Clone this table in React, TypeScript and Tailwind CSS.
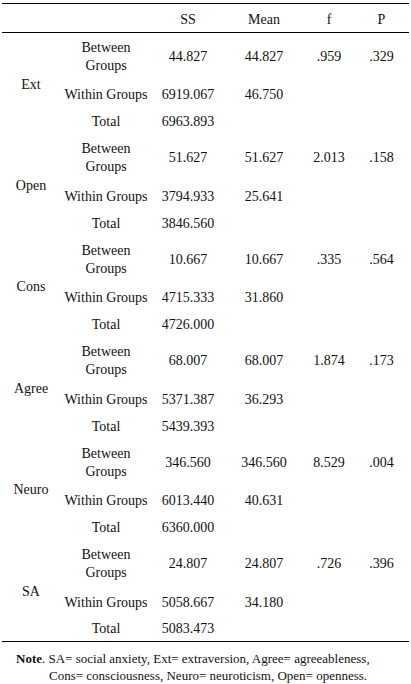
const groups = [
  { name: 'Ext', between: ['44.827', '44.827', '.959', '.329'], within: ['6919.067', '46.750'], total: '6963.893' },
  { name: 'Open', between: ['51.627', '51.627', '2.013', '.158'], within: ['3794.933', '25.641'], total: '3846.560' },
  { name: 'Cons', between: ['10.667', '10.667', '.335', '.564'], within: ['4715.333', '31.860'], total: '4726.000' },
  { name: 'Agree', between: ['68.007', '68.007', '1.874', '.173'], within: ['5371.387', '36.293'], total: '5439.393' },
  { name: 'Neuro', between: ['346.560', '346.560', '8.529', '.004'], within: ['6013.440', '40.631'], total: '6360.000' },
  { name: 'SA', between: ['24.807', '24.807', '.726', '.396'], within: ['5058.667', '34.180'], total: '5083.473' },
];

const cell = 'p-0 text-center align-middle font-normal';

const App = () => {
  return (
    <div className="w-[411px] h-[684px] bg-white pt-[3px] px-[2px] text-[#111] font-['Liberation_Serif','Times_New_Roman',serif]">
      <table className="w-[407px] table-fixed border-collapse text-[14px] leading-[18px]">
        <colgroup>
          <col className="w-[58px]" />
          <col className="w-[92px]" />
          <col className="w-[72px]" />
          <col className="w-[80px]" />
          <col className="w-[50px]" />
          <col className="w-[55px]" />
        </colgroup>
        <thead>
          <tr className="h-[29px] border-t border-b border-black">
            <th className={cell + ' pt-[3px]'}></th>
            <th className={cell + ' pt-[3px]'}></th>
            <th className={cell + ' pt-[3px]'}>SS</th>
            <th className={cell + ' pt-[3px]'}>Mean</th>
            <th className={cell + ' pt-[3px]'}>f</th>
            <th className={cell + ' pt-[3px]'}>P</th>
          </tr>
        </thead>
        <tbody className="border-b border-black">
          {groups.map((g) => (
            <>
              <tr key={g.name + '-b'} className="h-[46px]">
                <td rowSpan={3} className={cell + ' pt-[2px]'}>{g.name}</td>
                <td className={cell + ' pt-[2px]'}>Between<br />Groups</td>
                <td className={cell + ' pt-[2px]'}>{g.between[0]}</td>
                <td className={cell + ' pt-[2px]'}>{g.between[1]}</td>
                <td className={cell + ' pt-[2px]'}>{g.between[2]}</td>
                <td className={cell + ' pt-[2px]'}>{g.between[3]}</td>
              </tr>
              <tr key={g.name + '-w'} className="h-[31.5px]">
                <td className={cell + ' pt-[2px]'}>Within Groups</td>
                <td className={cell + ' pt-[2px]'}>{g.within[0]}</td>
                <td className={cell + ' pt-[2px]'}>{g.within[1]}</td>
                <td className={cell}></td>
                <td className={cell}></td>
              </tr>
              <tr key={g.name + '-t'} className="h-[24px]">
                <td className={cell}>Total</td>
                <td className={cell}>{g.total}</td>
                <td className={cell}></td>
                <td className={cell}></td>
                <td className={cell}></td>
              </tr>
            </>
          ))}
        </tbody>
      </table>
      <p className="mt-[8px] pl-[47px] pr-[22px] -indent-[33px] text-[13px] leading-[17px]">
        <span className="font-bold">Note</span>. SA= social anxiety, Ext= extraversion, Agree= agreeableness, Cons= consciousness, Neuro= neuroticism, Open= openness.
      </p>
    </div>
  );
};

export default App;
